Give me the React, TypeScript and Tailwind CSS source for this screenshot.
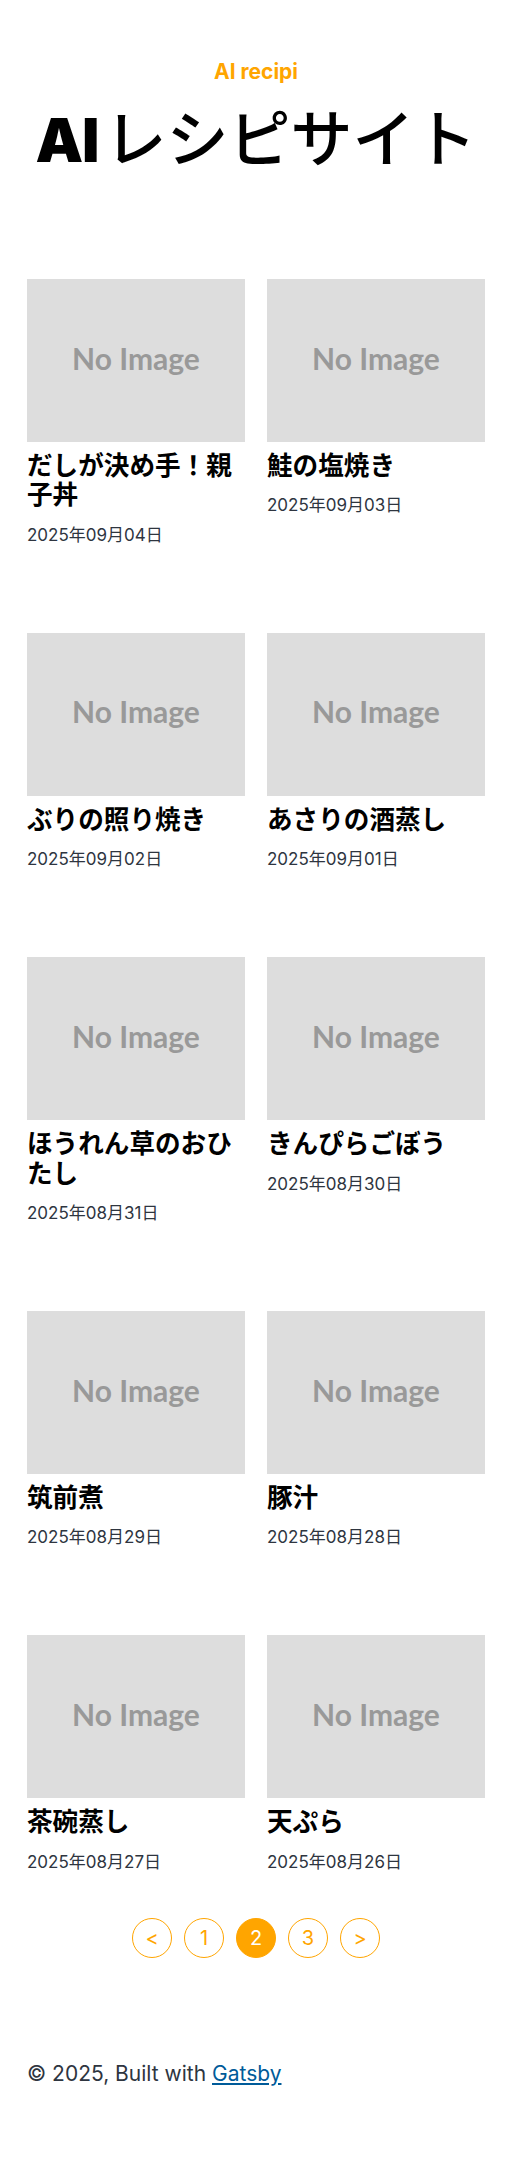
const recipes = [
  { title: 'だしが決め手！親子丼', date: '2025年09月04日' },
  { title: '鮭の塩焼き', date: '2025年09月03日' },
  { title: 'ぶりの照り焼き', date: '2025年09月02日' },
  { title: 'あさりの酒蒸し', date: '2025年09月01日' },
  { title: 'ほうれん草のおひたし', date: '2025年08月31日' },
  { title: 'きんぴらごぼう', date: '2025年08月30日' },
  { title: '筑前煮', date: '2025年08月29日' },
  { title: '豚汁', date: '2025年08月28日' },
  { title: '茶碗蒸し', date: '2025年08月27日' },
  { title: '天ぷら', date: '2025年08月26日' },
];

const pages = ['<', '1', '2', '3', '>'];

const jp = "font-['Noto_Sans_CJK_JP',sans-serif]";
const ui = "font-['Inter','Noto_Sans_CJK_JP',sans-serif]";

export default function App() {
  return (
    <div className="min-h-screen bg-white px-[27px]">
      {/* Header */}
      <header className="pt-[58px] text-center">
        <p className={`${ui} text-[21px] leading-[28px] font-bold text-[#ffa500]`}>AI recipi</p>
        <h1 className="mt-[6px] h-[82px] flex items-baseline justify-center pt-[12px] text-black whitespace-nowrap">
          <span className="font-['Inter',sans-serif] text-[60px] leading-none font-black tracking-[-1px] mr-[6px]">AI</span>
          <span className={`${jp} text-[62px] leading-none font-medium`}>レシピサイト</span>
        </h1>
      </header>

      {/* Recipe grid */}
      <main className="mt-[105px] grid grid-cols-2 gap-x-[22px] gap-y-[86px]">
        {recipes.map((r) => (
          <article key={r.title}>
            <div className="h-[163px] bg-[#dddddd] flex items-center justify-center pb-[5px]">
              <span className="font-['Lato',sans-serif] font-bold text-[30px] text-[#999999]">No Image</span>
            </div>
            <h2 className={`${jp} mt-[7px] text-[25.6px] leading-[29.4px] font-bold text-black`}>{r.title}</h2>
            <p className={`${ui} mt-[15px] text-[17px] leading-[24px] text-[#2e353f]`}>{r.date}</p>
          </article>
        ))}
      </main>

      {/* Pagination */}
      <nav className="mt-[44px] flex justify-center gap-[12px]">
        {pages.map((p) => (
          <span
            key={p}
            className={`${ui} w-[40px] h-[40px] rounded-full border-[1.5px] border-[#ffa500] flex items-center justify-center text-[20px] ${
              p === '2' ? 'bg-[#ffa500] text-white' : 'text-[#ffa500]'
            }`}
          >
            {p}
          </span>
        ))}
      </nav>

      {/* Footer */}
      <footer className={`${ui} mt-[102px] pb-[75px] text-[21px] leading-[28px] text-[#2e353f]`}>
        © 2025, Built with{' '}
        <a href="#" className="text-[#005b99] underline">
          Gatsby
        </a>
      </footer>
    </div>
  );
}
